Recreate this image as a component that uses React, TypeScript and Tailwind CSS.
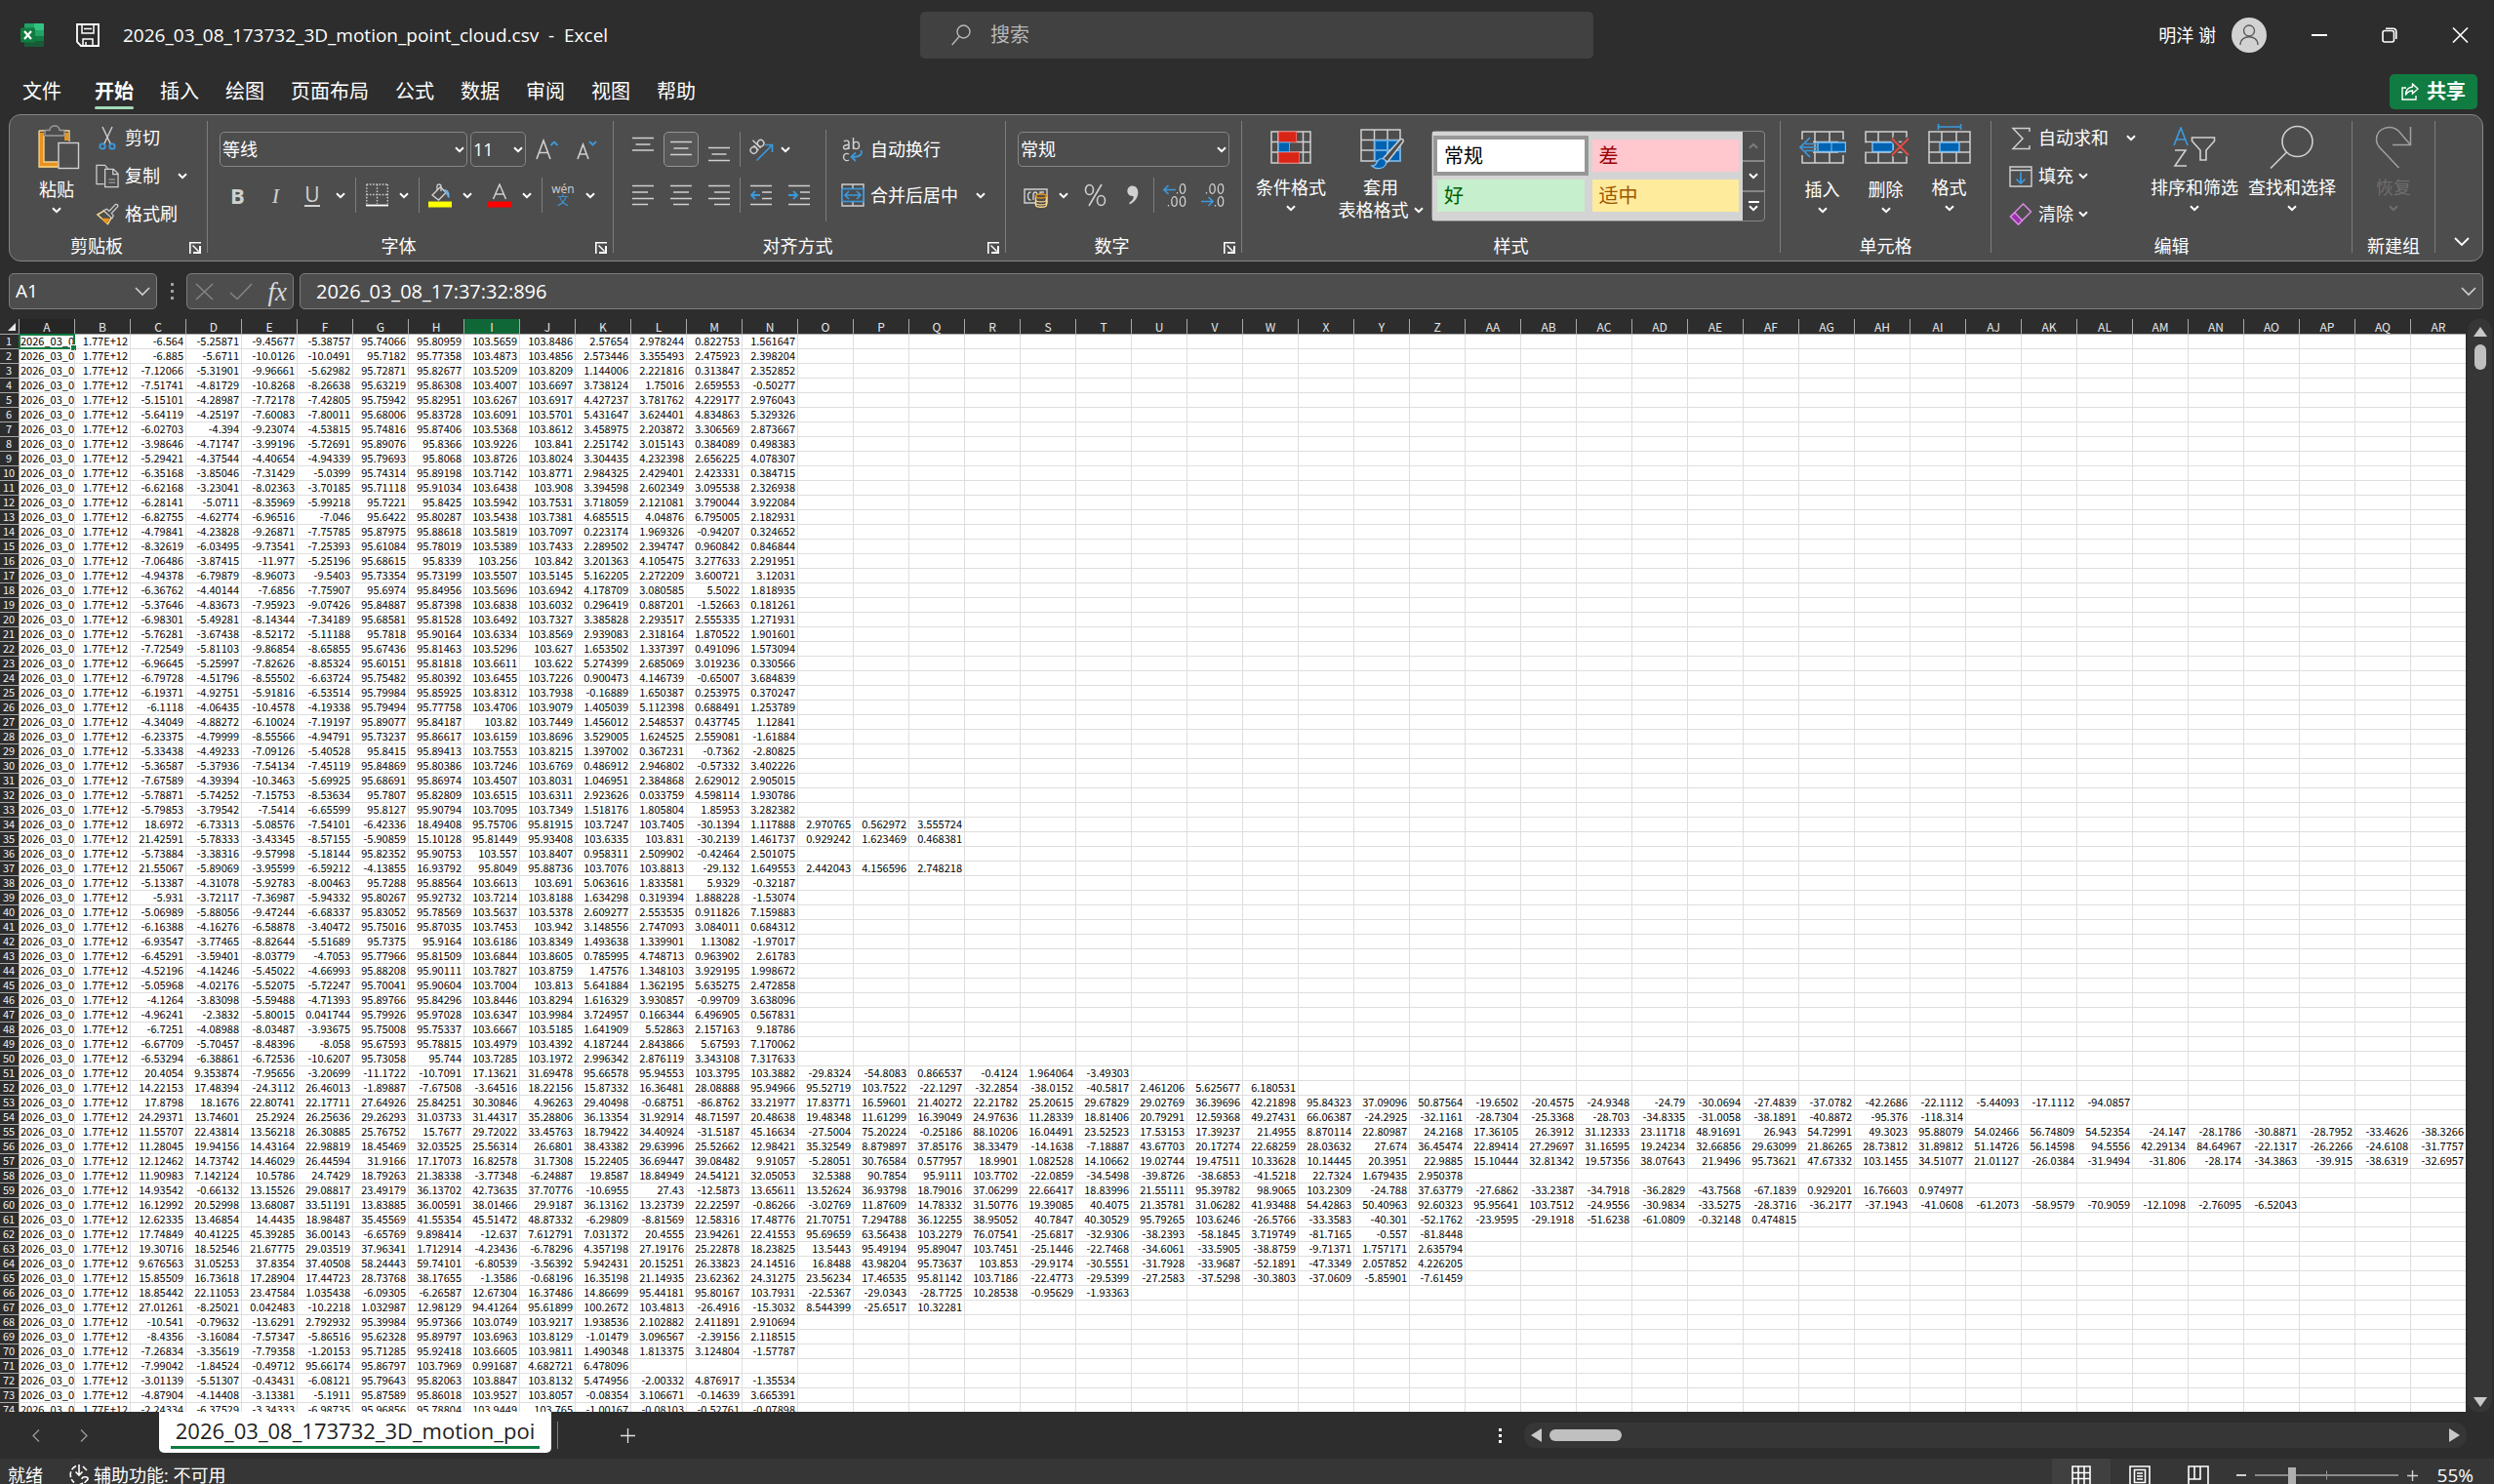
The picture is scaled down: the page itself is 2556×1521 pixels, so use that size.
import type { ReactNode } from "react";

const RAW = `
-6.564 -5.25871 -9.45677 -5.38757 95.74066 95.80959 103.5659 103.8486 2.57654 2.978244 0.822753 1.561647
-6.885 -5.6711 -10.0126 -10.0491 95.7182 95.77358 103.4873 103.4856 2.573446 3.355493 2.475923 2.398204
-7.12066 -5.31901 -9.96661 -5.62982 95.72871 95.82677 103.5209 103.8209 1.144006 2.221816 0.313847 2.352852
-7.51741 -4.81729 -10.8268 -8.26638 95.63219 95.86308 103.4007 103.6697 3.738124 1.75016 2.659553 -0.50277
-5.15101 -4.28987 -7.72178 -7.42805 95.75942 95.82951 103.6267 103.6917 4.427237 3.781762 4.229177 2.976043
-5.64119 -4.25197 -7.60083 -7.80011 95.68006 95.83728 103.6091 103.5701 5.431647 3.624401 4.834863 5.329326
-6.02703 -4.394 -9.23074 -4.53815 95.74816 95.87406 103.5368 103.8612 3.458975 2.203872 3.306569 2.873667
-3.98646 -4.71747 -3.99196 -5.72691 95.89076 95.8366 103.9226 103.841 2.251742 3.015143 0.384089 0.498383
-5.29421 -4.37544 -4.40654 -4.94339 95.79693 95.8068 103.8726 103.8024 3.304435 4.232398 2.656225 4.078307
-6.35168 -3.85046 -7.31429 -5.0399 95.74314 95.89198 103.7142 103.8771 2.984325 2.429401 2.423331 0.384715
-6.62168 -3.23041 -8.02363 -3.70185 95.71118 95.91034 103.6438 103.908 3.394598 2.602349 3.095538 2.326938
-6.28141 -5.0711 -8.35969 -5.99218 95.7221 95.8425 103.5942 103.7531 3.718059 2.121081 3.790044 3.922084
-6.82755 -4.62774 -6.96516 -7.046 95.6422 95.80287 103.5438 103.7381 4.685515 4.04876 6.795005 2.182931
-4.79841 -4.23828 -9.26871 -7.75785 95.87975 95.88618 103.5819 103.7097 0.223174 1.969326 -0.94207 0.324652
-8.32619 -6.03495 -9.73541 -7.25393 95.61084 95.78019 103.5389 103.7433 2.289502 2.394747 0.960842 0.846844
-7.06486 -3.87415 -11.977 -5.25196 95.68615 95.8339 103.256 103.842 3.201363 4.105475 3.277633 2.291951
-4.94378 -6.79879 -8.96073 -9.5403 95.73354 95.73199 103.5507 103.5145 5.162205 2.272209 3.600721 3.12031
-6.36762 -4.40144 -7.6856 -7.75907 95.6974 95.84956 103.5696 103.6942 4.178709 3.080585 5.5022 1.818935
-5.37646 -4.83673 -7.95923 -9.07426 95.84887 95.87398 103.6838 103.6032 0.296419 0.887201 -1.52663 0.181261
-6.98301 -5.49281 -8.14344 -7.34189 95.68581 95.81528 103.6492 103.7327 3.385828 2.293517 2.555335 1.271931
-5.76281 -3.67438 -8.52172 -5.11188 95.7818 95.90164 103.6334 103.8569 2.939083 2.318164 1.870522 1.901601
-7.72549 -5.81103 -9.86854 -8.65855 95.67436 95.81463 103.5296 103.627 1.653502 1.337397 0.491096 1.573094
-6.96645 -5.25997 -7.82626 -8.85324 95.60151 95.81818 103.6611 103.622 5.274399 2.685069 3.019236 0.330566
-6.79728 -4.51796 -8.55502 -6.63724 95.75482 95.80392 103.6455 103.7226 0.900473 4.146739 -0.65007 3.684839
-6.19371 -4.92751 -5.91816 -6.53514 95.79984 95.85925 103.8312 103.7938 -0.16889 1.650387 0.253975 0.370247
-6.1118 -4.06435 -10.4578 -4.19338 95.79494 95.77758 103.4706 103.9079 1.405039 5.112398 0.688491 1.253789
-4.34049 -4.88272 -6.10024 -7.19197 95.89077 95.84187 103.82 103.7449 1.456012 2.548537 0.437745 1.12841
-6.23375 -4.79999 -8.55566 -4.94791 95.73237 95.86617 103.6159 103.8696 3.529005 1.624525 2.559081 -1.61884
-5.33438 -4.49233 -7.09126 -5.40528 95.8415 95.89413 103.7553 103.8215 1.397002 0.367231 -0.7362 -2.80825
-5.36587 -5.37936 -7.54134 -7.45119 95.84869 95.80386 103.7246 103.6769 0.486912 2.946802 -0.57332 3.402226
-7.67589 -4.39394 -10.3463 -5.69925 95.68691 95.86974 103.4507 103.8031 1.046951 2.384868 2.629012 2.905015
-5.78871 -5.74252 -7.15753 -8.53634 95.7807 95.82809 103.6515 103.6311 2.923626 0.033759 4.598114 1.930786
-5.79853 -3.79542 -7.5414 -6.65599 95.8127 95.90794 103.7095 103.7349 1.518176 1.805804 1.85953 3.282382
18.6972 -6.73313 -5.08576 -7.54101 -6.42336 18.49408 95.75706 95.81915 103.7247 103.7405 -30.1394 1.117888 2.970765 0.562972 3.555724
21.42591 -5.78333 -3.43345 -8.57155 -5.90859 15.10128 95.81449 95.93408 103.6335 103.831 -30.2139 1.461737 0.929242 1.623469 0.468381
-5.73884 -3.38316 -9.57998 -5.18144 95.82352 95.90753 103.557 103.8407 0.958311 2.509902 -0.42464 2.501075
21.55067 -5.89069 -3.95599 -6.59212 -4.13855 16.93792 95.8049 95.88736 103.7076 103.8813 -29.132 1.649553 2.442043 4.156596 2.748218
-5.13387 -4.31078 -5.92783 -8.00463 95.7288 95.88564 103.6613 103.691 5.063616 1.833581 5.9329 -0.32187
-5.931 -3.72117 -7.36987 -5.94332 95.80267 95.92732 103.7214 103.8188 1.634298 0.319394 1.888228 -1.53074
-5.06989 -5.88056 -9.47244 -6.68337 95.83052 95.78569 103.5637 103.5378 2.609277 2.553535 0.911826 7.159883
-6.16388 -4.16276 -6.58878 -3.40472 95.75016 95.87035 103.7453 103.942 3.148556 2.747093 3.084011 0.684312
-6.93547 -3.77465 -8.82644 -5.51689 95.7375 95.9164 103.6186 103.8349 1.493638 1.339901 1.13082 -1.97017
-6.45291 -3.59401 -8.03779 -4.7053 95.77966 95.81509 103.6844 103.8605 0.785995 4.748713 0.963902 2.61783
-4.52196 -4.14246 -5.45022 -4.66993 95.88208 95.90111 103.7827 103.8759 1.47576 1.348103 3.929195 1.998672
-5.05968 -4.02176 -5.52075 -5.72247 95.70041 95.90604 103.7004 103.813 5.641884 1.362195 5.635275 2.472858
-4.1264 -3.83098 -5.59488 -4.71393 95.89766 95.84296 103.8446 103.8294 1.616329 3.930857 -0.99709 3.638096
-4.96241 -2.3832 -5.80015 0.041744 95.79926 95.97028 103.6347 103.9984 3.724957 0.166344 6.496905 0.567831
-6.7251 -4.08988 -8.03487 -3.93675 95.75008 95.75337 103.6667 103.5185 1.641909 5.52863 2.157163 9.18786
-6.67709 -5.70457 -8.48396 -8.058 95.67593 95.78815 103.4979 103.4392 4.187244 2.843866 5.67593 7.170062
-6.53294 -6.38861 -6.72536 -10.6207 95.73058 95.744 103.7285 103.1972 2.996342 2.876119 3.343108 7.317633
20.4054 9.353874 -7.95656 -3.20699 -11.1722 -10.7091 17.13621 31.69478 95.66578 95.94553 103.3795 103.3882 -29.8324 -54.8083 0.866537 -0.4124 1.964064 -3.49303
14.22153 17.48394 -24.3112 26.46013 -1.89887 -7.67508 -3.64516 18.22156 15.87332 16.36481 28.08888 95.94966 95.52719 103.7522 -22.1297 -32.2854 -38.0152 -40.5817 2.461206 5.625677 6.180531
17.8798 18.1676 22.80741 22.17711 27.64926 25.84251 30.30846 4.96263 29.40498 -0.68751 -86.8762 33.21977 17.83771 16.59601 21.40272 22.21782 25.20615 29.67829 29.02769 36.39696 42.21898 95.84323 37.09096 50.87564 -19.6502 -20.4575 -24.9348 -24.79 -30.0694 -27.4839 -37.0782 -42.2686 -22.1112 -5.44093 -17.1112 -94.0857
24.29371 13.74601 25.2924 26.25636 29.26293 31.03733 31.44317 35.28806 36.13354 31.92914 48.71597 20.48638 19.48348 11.61299 16.39049 24.97636 11.28339 18.81406 20.79291 12.59368 49.27431 66.06387 -24.2925 -32.1161 -28.7304 -25.3368 -28.703 -34.8335 -31.0058 -38.1891 -40.8872 -95.376 -118.314
11.55707 22.43814 13.56218 26.30885 25.76752 15.7677 29.72022 33.45763 18.79422 34.40924 -31.5187 45.16634 -27.5004 75.20224 -0.25186 88.10206 16.04491 23.52523 17.53153 17.39237 21.4955 8.870114 22.80987 24.2168 17.36105 26.3912 31.12333 23.11718 48.91691 26.943 54.72991 49.3023 95.88079 54.02466 56.74809 54.52354 -24.147 -28.1786 -30.8871 -28.7952 -33.4626 -38.3266
11.28045 19.94156 14.43164 22.98819 18.45469 32.03525 25.56314 26.6801 38.43382 29.63996 25.52662 12.98421 35.32549 8.879897 37.85176 38.33479 -14.1638 -7.18887 43.67703 20.17274 22.68259 28.03632 27.674 36.45474 22.89414 27.29697 31.16595 19.24234 32.66856 29.63099 21.86265 28.73812 31.89812 51.14726 56.14598 94.5556 42.29134 84.64967 -22.1317 -26.2266 -24.6108 -31.7757
12.12462 14.73742 14.46029 26.44594 31.9166 17.17073 16.82578 31.7308 15.22405 36.69447 39.08482 9.91057 -5.28051 30.76584 0.577957 18.9901 1.082528 14.10662 19.02744 19.47511 10.33628 10.14445 20.3951 22.9885 15.10444 32.81342 19.57356 38.07643 21.9496 95.73621 47.67332 103.1455 34.51077 21.01127 -26.0384 -31.9494 -31.806 -28.174 -34.3863 -39.915 -38.6319 -32.6957
11.90983 7.142124 10.5786 24.7429 18.79263 21.38338 -3.77348 -6.24887 19.8587 18.84949 24.54121 32.05053 32.5388 90.7854 95.9111 103.7702 -22.0859 -34.5498 -39.8726 -38.6853 -41.5218 22.7324 1.679435 2.950378
14.93542 -0.66132 13.15526 29.08817 23.49179 36.13702 42.73635 37.70776 -10.6955 27.43 -12.5873 13.65611 13.52624 36.93798 18.79016 37.06299 22.66417 18.83996 21.55111 95.39782 98.9065 103.2309 -24.788 37.63779 -27.6862 -33.2387 -34.7918 -36.2829 -43.7568 -67.1839 0.929201 16.76603 0.974977
16.12992 20.52998 13.68087 33.51191 13.83885 36.00591 38.01466 29.9187 36.13162 13.23739 22.22597 -0.86266 -3.02769 11.87609 14.78332 31.50776 19.39085 40.4075 21.35781 31.06282 41.93488 54.42863 50.40963 92.60323 95.95641 103.7512 -24.9556 -30.9834 -33.5275 -28.3716 -36.2177 -37.1943 -41.0608 -61.2073 -58.9579 -70.9059 -12.1098 -2.76095 -6.52043
12.62335 13.46854 14.4435 18.98487 35.45569 41.55354 45.51472 48.87332 -6.29809 -8.81569 12.58316 17.48776 21.70751 7.294788 36.12255 38.95052 40.7847 40.30529 95.79265 103.6246 -26.5766 -33.3583 -40.301 -52.1762 -23.9595 -29.1918 -51.6238 -61.0809 -0.32148 0.474815
17.74849 40.41225 45.39285 36.00143 -6.65769 9.898414 -12.637 7.612791 7.031372 20.4555 23.94261 22.41553 95.69659 63.56438 103.2279 76.07541 -25.6817 -32.9306 -38.2393 -58.1845 3.719749 -81.7165 -0.557 -81.8448
19.30716 18.52546 21.67775 29.03519 37.96341 1.712914 -4.23436 -6.78296 4.357198 27.19176 25.22878 18.23825 13.5443 95.49194 95.89047 103.7451 -25.1446 -22.7468 -34.6061 -33.5905 -38.8759 -9.71371 1.757171 2.635794
9.676563 31.05253 37.8354 37.40508 58.24443 59.74101 -6.80539 -3.56392 5.942431 20.15251 26.33823 24.14516 16.8488 43.98204 95.73637 103.853 -29.9174 -30.5551 -31.7928 -33.9687 -52.1891 -47.3349 2.057852 4.226205
15.85509 16.73618 17.28904 17.44723 28.73768 38.17655 -1.3586 -0.68196 16.35198 21.14935 23.62362 24.31275 23.56234 17.46535 95.81142 103.7186 -22.4773 -29.5399 -27.2583 -37.5298 -30.3803 -37.0609 -5.85901 -7.61459
18.85442 22.11053 23.47584 1.035438 -6.09305 -6.26587 12.67304 16.37486 14.86699 95.44181 95.80167 103.7931 -22.5367 -29.0343 -28.7725 10.28538 -0.95629 -1.93363
27.01261 -8.25021 0.042483 -10.2218 1.032987 12.98129 94.41264 95.61899 100.2672 103.4813 -26.4916 -15.3032 8.544399 -25.6517 10.32281
-10.541 -0.79632 -13.6291 2.792932 95.39984 95.97366 103.0749 103.9217 1.938536 2.102882 2.411891 2.910694
-8.4356 -3.16084 -7.57347 -5.86516 95.62328 95.89797 103.6963 103.8129 -1.01479 3.096567 -2.39156 2.118515
-7.26834 -3.35619 -7.79358 -1.20153 95.71285 95.92418 103.6605 103.9811 1.490348 1.813375 3.124804 -1.57787
-7.99042 -1.84524 -0.49712 95.66174 95.86797 103.7969 0.991687 4.682721 6.478096
-3.01139 -5.51307 -0.43431 -6.08121 95.79643 95.82063 103.8847 103.8132 5.474956 -2.00332 4.876917 -1.35534
-4.87904 -4.14408 -3.13381 -5.1911 95.87589 95.86018 103.9527 103.8057 -0.08354 3.106671 -0.14639 3.665391
-2.24334 -6.37529 -3.34333 -6.98735 95.96856 95.78804 103.9449 103.765 -1.00167 -0.08103 -0.52761 -0.07898
`;

const ROWS = RAW.trim()
  .split("\n")
  .map((line) => ["2026_03_08", "1.77E+12", ...line.split(" ")]);

const COLS = Array.from({ length: 44 }, (_, i) =>
  i < 26 ? String.fromCharCode(65 + i) : "A" + String.fromCharCode(39 + i)
);

const G = "#d0d0d0";
const B = "#3b99dd";

/* ---------- shared pieces ---------- */

function Chev({ color = "#fff" }: { color?: string }) {
  return (
    <svg width="10" height="7" viewBox="0 0 10 7" fill="none" stroke={color} strokeWidth="2" className="shrink-0">
      <path d="M1 1.2 5 5.2 9 1.2" />
    </svg>
  );
}

function Tool({ label, className = "", children }: { label: string; className?: string; children: ReactNode }) {
  return (
    <button type="button" aria-label={label} className={`flex h-9 shrink-0 items-center justify-center ${className}`}>
      {children}
    </button>
  );
}

function VLine({ className = "" }: { className?: string }) {
  return <div className={`w-px shrink-0 bg-[#7d7d7d] ${className}`} />;
}

function Group({ label, launcher, className, children }: { label: string; launcher?: boolean; className: string; children: ReactNode }) {
  return (
    <section aria-label={label} className={`flex flex-col ${className}`}>
      <div className="h-[122px]">{children}</div>
      <div className="flex h-6 items-center">
        <span className="flex-1 text-center leading-6 whitespace-nowrap">{label}</span>
        {launcher && (
          <button type="button" aria-label={`${label}设置`} className="flex w-6 justify-center pt-1">
            <svg width="12" height="12" viewBox="0 0 12 12" fill="none" stroke="#fff">
              <path d="M.8 12V.8H12" strokeWidth="1.6" />
              <path d="M3.5 3.5 9.5 9.5" strokeWidth="1.4" />
              <path d="M11 4v7H4" strokeWidth="2" />
            </svg>
          </button>
        )}
      </div>
    </section>
  );
}

function BigButton({ icon, label, className, dim, gap = "pt-[3px]" }: { icon: ReactNode; label: string; className: string; dim?: boolean; gap?: string }) {
  return (
    <button type="button" className={`flex shrink-0 flex-col items-center ${className} ${dim ? "text-[#6e6e6e]" : ""}`}>
      <span className="flex h-[58px] items-center justify-center">{icon}</span>
      <span className={`leading-6 whitespace-nowrap ${gap}`}>{label}</span>
      <span className="mt-[6px]">
        <Chev color={dim ? "#6e6e6e" : "#fff"} />
      </span>
    </button>
  );
}

function RowButton({ icon, label, children }: { icon: ReactNode; label: string; children?: ReactNode }) {
  return (
    <button type="button" className="flex h-[39px] items-center whitespace-nowrap">
      <span className="mr-[6px] flex w-6 justify-center">{icon}</span>
      {label}
      {children}
    </button>
  );
}

function Combo({ label, value, className }: { label: string; value: string; className: string }) {
  return (
    <div className={`relative h-9 shrink-0 ${className}`}>
      <select
        aria-label={label}
        defaultValue={value}
        className="h-full w-full appearance-none rounded-[5px] border border-[#868686] bg-[#4d4d4d] pl-[2px] text-[18px] text-white"
      >
        <option>{value}</option>
      </select>
      <span className="pointer-events-none absolute top-[15px] right-[3px]">
        <Chev />
      </span>
    </div>
  );
}

/* ---------- icons ---------- */

const ExcelLogo = () => (
  <svg width="26" height="26" viewBox="0 0 26 26">
    <path d="M6 1h9v7H5V2a1 1 0 0 1 1-1z" fill="#21a366" />
    <path d="M15 1h9a1 1 0 0 1 1 1v6H15z" fill="#33c481" />
    <path d="M5 8h10v6H5z" fill="#107c41" />
    <path d="M15 8h10v6H15z" fill="#21a366" />
    <path d="M15 14h10v5H15z" fill="#107c41" />
    <path d="M5 14h10v5h10v5a1 1 0 0 1-1 1H6a1 1 0 0 1-1-1z" fill="#185c37" />
    <rect x="1" y="5.5" width="15" height="15" rx="1.2" fill="#107c41" />
    <path d="m5 9 7 8M12 9l-7 8" stroke="#fff" strokeWidth="2.2" />
  </svg>
);

const SaveIcon = () => (
  <svg width="24" height="24" viewBox="0 0 24 24" fill="none" stroke="#fff" strokeWidth="1.8">
    <path d="M1 1h22v22H5L1 19z" />
    <path d="M6 1v9h12V1M7 23v-7h10v7M10 19v4M8 5.5h8" strokeWidth="1.5" />
  </svg>
);

const PasteIcon = () => (
  <svg width="44" height="46" viewBox="0 0 44 46" fill="none" className="ml-[5px]">
    <path d="M3.5 8v33h18" stroke="#e8931f" strokeWidth="5" />
    <path d="M29 8v8" stroke="#e8931f" strokeWidth="4" />
    <path d="M1 6h7M25 6h7v11M1 6v37h19M6 11v27h14" stroke="#fbd88d" strokeWidth="1.3" />
    <path d="M7 11V5.500h5c0-6 10-6 10 0h5V11z" fill="#4d4d4d" stroke="#9a9a9a" strokeWidth="1.4" />
    <rect x="21" y="18.500" width="20.500" height="26" fill="#4d4d4d" stroke={G} strokeWidth="1.4" />
  </svg>
);

const CutIcon = () => (
  <svg width="18" height="25" viewBox="0 0 18 25" fill="none">
    <path d="M4 1 12.500 19M14 1 5.500 19" stroke={G} strokeWidth="1.4" />
    <circle cx="4" cy="21" r="2.700" stroke={B} strokeWidth="1.800" />
    <circle cx="14" cy="21" r="2.700" stroke={B} strokeWidth="1.800" />
  </svg>
);

const CopyIcon = () => (
  <svg width="25" height="25" viewBox="0 0 25 25" fill="none" stroke={G} strokeWidth="1.300">
    <path d="M9 21H1V1h9l3 3.500" />
    <path d="M10 5h9l5 5v14H10zM18.500 5v5.500H24" />
    <path d="M14 16h7M14 19.500h7" stroke="#9a9a9a" />
  </svg>
);

const BrushIcon = () => (
  <svg width="25" height="24" viewBox="0 0 25 24" fill="none">
    <path d="M2 12 13 22l4.500-8L9 8z" stroke="#fbd88d" strokeWidth="1.500" />
    <path d="M6 16h9l-3 6z" fill="#e8931f" />
    <path d="m8.500 7.500 9 8.500 1.500-3-2-2.500 6.500-7c1-1.500-1-3.300-2.500-2.300l-6.500 7L12 6z" fill="#4d4d4d" stroke={G} strokeWidth="1.300" />
  </svg>
);

function LinesIcon({ d, w = 22 }: { d: string; w?: number }) {
  return (
    <svg width={w} height="36" viewBox={`0 0 ${w} 36`} stroke={G} strokeWidth="1.400">
      <path d={d} />
    </svg>
  );
}

const BorderIcon = () => (
  <svg width="23" height="24" viewBox="0 0 23 24" fill="none" stroke={G}>
    <path d="M.7 1h22M.7 11.500h22M.8 1v20M11.500 1v20M22.300 1v20" strokeWidth="1.400" strokeDasharray="1.600 1.600" />
    <path d="M0 22.500h23" stroke="#fff" strokeWidth="1.800" />
  </svg>
);

const FillIcon = () => (
  <svg width="24" height="25" viewBox="0 0 24 25" fill="none">
    <path d="M4 12 12.500 3.500 18 9.500 10.500 17z" stroke={G} strokeWidth="1.400" />
    <path d="M9 7V2.500C9 .5 13 .3 13 3v5" stroke={G} strokeWidth="1.300" />
    <path d="M16 6c5 0 6 4 5.500 9-2 0-2-4-4-5z" fill="#6fb1e4" />
    <path d="M0 18.500h24v6H0z" fill="#ff0" />
  </svg>
);

const FontColorIcon = () => (
  <svg width="24" height="25" viewBox="0 0 24 25" fill="none">
    <path d="M5.500 16 12 1l6.500 15M8 11h8" stroke={G} strokeWidth="1.500" />
    <path d="M0 18.500h24v6H0z" fill="#f00" />
  </svg>
);

const GrowIcon = ({ small }: { small?: boolean }) => (
  <svg width="24" height="24" viewBox="0 0 24 24" fill="none">
    <path d={small ? "M2 22 7.500 7 13 22M4 17h7" : "M1 22 8 3l7 19M3.500 15.500h9"} stroke={G} strokeWidth="1.600" />
    <path d={small ? "m14 4 3.500 3.500L21 4" : "m15.500 8 3.500-3.500L22.500 8"} stroke={B} strokeWidth="1.800" />
  </svg>
);

const OrientIcon = () => (
  <svg width="26" height="26" viewBox="0 0 26 26" fill="none">
    <g transform="rotate(-45 8 10)" stroke={G} strokeWidth="1.400">
      <circle cx="3.500" cy="11" r="3.300" />
      <path d="M7 7.500v7M10 3v11.500" />
      <circle cx="13.500" cy="11" r="3.300" />
    </g>
    <path d="M8.500 24.500 24 9M17 8.500h7.500V16" stroke={B} strokeWidth="1.700" />
  </svg>
);

const WrapIcon = () => (
  <svg width="22" height="26" viewBox="0 0 22 26" fill="none">
    <g stroke={G} strokeWidth="1.400">
      <path d="M2 5c1-1.300 5-1.500 5 1.500V13M7 8.500C3 8.200 1.500 9.500 1.500 11c0 2.500 4 2.200 5.500 0M11.500 1v12" />
      <ellipse cx="14.500" cy="9" rx="3" ry="3.600" />
      <path d="M7 18c-2-1.300-5.500-.5-5.500 3S5 25.300 7 24" />
    </g>
    <path d="M19.500 14c1.500 4-1 7-9 6.800M14 16.500l-4.500 4.300L14 25" stroke={B} strokeWidth="1.800" />
  </svg>
);

const MergeIcon = () => (
  <svg width="24" height="24" viewBox="0 0 24 24" fill="none">
    <path d="M1 1h22v22H1zM12 1v4M12 19v4" stroke={G} strokeWidth="1.400" />
    <rect x="1" y="5.500" width="22" height="13" fill="#4d4d4d" stroke={B} strokeWidth="1.600" />
    <path d="M4 12h16M8 8l-4 4 4 4M16 8l4 4-4 4" stroke={B} strokeWidth="1.700" />
  </svg>
);

function IndentIcon({ right }: { right?: boolean }) {
  return (
    <svg width="22" height="36" viewBox="0 0 22 36" fill="none">
      <path d="M0 8.500h22M12 15h10M12 21.500h10M0 27.500h22" stroke={G} strokeWidth="1.400" />
      <path d={right ? "M0 18h9M5 14l4 4-4 4" : "M1 18h9M5 14l-4 4 4 4"} stroke={B} strokeWidth="1.800" />
    </svg>
  );
}

const MoneyIcon = () => (
  <svg width="25" height="25" viewBox="0 0 25 25" fill="none">
    <path d="M1 6h23v14H1z" stroke={G} strokeWidth="1.400" />
    <path d="M7.500 9C3.500 9 3.500 17 7.500 17M14 12c0-4-4-4-4 0v5M17 11V9h4" stroke={G} strokeWidth="1.400" />
    <path d="M12.500 13v9c0 3 11 3 11 0v-9z" fill="#4d4d4d" stroke="#fbd88d" strokeWidth="1.500" />
    <ellipse cx="18" cy="13" rx="5.500" ry="2" fill="#4d4d4d" stroke="#e8931f" strokeWidth="1.500" />
    <path d="M12.500 17c0 2.500 11 2.500 11 0M12.500 20c0 2.500 11 2.500 11 0" stroke="#fbd88d" strokeWidth="1.200" />
  </svg>
);

const PercentIcon = () => (
  <svg width="23" height="24" viewBox="0 0 23 24" fill="none" stroke={G} strokeWidth="1.600">
    <ellipse cx="5.500" cy="6.500" rx="4" ry="5" />
    <ellipse cx="17.500" cy="17.500" rx="4" ry="5" />
    <path d="M18 1 5 23" />
  </svg>
);

const CommaIcon = () => (
  <svg width="12" height="20" viewBox="0 0 12 20">
    <path d="M5.500.5c8.500 0 8 15-3 19v-2c3.500-2 4.500-4.500 4-6.500-8 1-8-10.500-1-10.500z" fill={G} />
  </svg>
);

function DecimalIcon({ less }: { less?: boolean }) {
  return (
    <svg width="24" height="26" viewBox="0 0 24 26" fill="none">
      <g stroke={G} strokeWidth="1.300">
        {less ? (
          <>
            <ellipse cx="11.500" cy="6.500" rx="2.700" ry="4.800" />
            <ellipse cx="20" cy="6.500" rx="2.700" ry="4.800" />
            <ellipse cx="20" cy="19.500" rx="2.700" ry="4.800" />
            <path d="M5.500 10v1.500M14.500 23v1.500" />
          </>
        ) : (
          <>
            <ellipse cx="20" cy="6.500" rx="2.700" ry="4.800" />
            <ellipse cx="11.500" cy="19.500" rx="2.700" ry="4.800" />
            <ellipse cx="20" cy="19.500" rx="2.700" ry="4.800" />
            <path d="M14.500 10v1.500M5.500 23v1.500" />
          </>
        )}
      </g>
      <path
        d={less ? "M0 19.500h12M7.500 15l4.500 4.500L7.500 24" : "M1 7.500h12M5.500 3 1 7.500 5.500 12"}
        stroke={B}
        strokeWidth="1.700"
      />
    </svg>
  );
}

const CondIcon = () => (
  <svg width="42" height="34" viewBox="0 0 42 34" fill="none">
    <path d="M1 1h40v32H1zM1 11.500h40M1 22h40M8 1v32M33.500 1v32" stroke={G} strokeWidth="1.500" />
    <path d="M8.500 1h18v10.500h-18zM8.500 22h21v11h-21z" fill="#d92516" stroke="#f0625a" />
    <path d="M8.500 12h11v9.500h-11z" fill="#0063b1" stroke="#5aa7e4" />
  </svg>
);

const TableIcon = () => (
  <svg width="46" height="42" viewBox="0 0 46 42" fill="none">
    <path d="M15 11.500h26V33H15z" fill="#0063b1" />
    <path d="M1 1h40v32H1zM1 11.500h40M1 22h40M14.500 1v32M28 1v32" stroke={G} strokeWidth="1.500" />
    <path d="M15 12h26v21H15zM15 22h26M28 12v21" stroke="#5aa7e4" strokeWidth="1.300" />
    <path d="m23 31 17-19c3-3 5.500-1 3.500 2L28 34z" fill="#4d4d4d" stroke={G} strokeWidth="1.500" />
    <path d="M12 38c6 0 4-5 8-7 5-1.500 8 3 6 6-3 4.500-10 5-14 1z" fill="#0063b1" stroke="#7dc0f5" strokeWidth="1.300" />
  </svg>
);

function CellsIcon({ kind }: { kind: "insert" | "delete" | "format" }) {
  return (
    <svg width="48" height="50" viewBox="0 0 48 50" fill="none">
      <path d="M3 9h42v32H3zM3 19.500h42M3 30h42M16 9v32M31 9v32" stroke={G} strokeWidth="1.500" />
      {kind === "insert" && (
        <>
          <path d="M40 17h8v16h-8z" fill="#4d4d4d" />
          <path d="M2 17h12v16H2z" fill="#4d4d4d" />
          <path d="M19 20h28.500v9.500H19z" fill="#0063b1" stroke="#7dc0f5" strokeWidth="1.400" />
          <path d="M33 20v10" stroke="#7dc0f5" />
          <path d="M1 25h19M11 15 1 25l10 10M6 21.500h13M6 28.500h13" stroke={B} strokeWidth="1.600" />
        </>
      )}
      {kind === "delete" && (
        <>
          <path d="M0 20.500h9v9H0zM40 20h6v10h-6z" fill="#4d4d4d" />
          <path d="M10 20h21v9.500H10z" fill="#0063b1" stroke="#7dc0f5" strokeWidth="1.400" />
          <path d="m30 16 17 17M47 16 30 33" stroke="#4d4d4d" strokeWidth="5" />
          <path d="m30 16 17 17M47 16 30 33" stroke="#e74b45" strokeWidth="1.800" />
        </>
      )}
      {kind === "format" && (
        <>
          <path d="M14 20h20v9.500H14z" fill="#0063b1" stroke="#7dc0f5" strokeWidth="1.400" />
          <path d="M12.500 4h23M12.500 1v6M35.500 1v6" stroke={B} strokeWidth="1.600" />
        </>
      )}
    </svg>
  );
}

const SigmaIcon = () => (
  <svg width="20" height="24" viewBox="0 0 20 24" fill="none" stroke={G} strokeWidth="1.500">
    <path d="M19 5V1.500H2L12 12 2 22.500h17V19" />
  </svg>
);

const FillDownIcon = () => (
  <svg width="24" height="22" viewBox="0 0 24 22" fill="none">
    <path d="M1 1h22v20H1zM1 4.500h22" stroke={G} strokeWidth="1.400" />
    <path d="M12 6.500V18M7.500 13.500 12 18l4.500-4.500" stroke={B} strokeWidth="1.700" />
  </svg>
);

const EraserIcon = () => (
  <svg width="24" height="23" viewBox="0 0 24 23" fill="none" stroke="#d88be0" strokeWidth="1.500">
    <path d="M1.500 14 14.500 1 22.500 9 9.500 22z" />
    <path d="M1.500 14 6 10l7.500 8-4 4z" fill="#9b2fae" />
  </svg>
);

const SortIcon = () => (
  <svg width="44" height="42" viewBox="0 0 44 42" fill="none">
    <path d="m1 19 7-18 7 18M3.500 13h9" stroke={B} strokeWidth="1.700" />
    <path d="M2 24h11L2 40h12" stroke={G} strokeWidth="1.600" />
    <path d="M19.500 11h23v3.500L34 24v10h-6V24l-8.500-9.500z" stroke={G} strokeWidth="1.600" />
  </svg>
);

const FindIcon = () => (
  <svg width="46" height="46" viewBox="0 0 46 46" fill="none" stroke={G} strokeWidth="1.600">
    <circle cx="28.500" cy="17" r="15.500" />
    <path d="M17.500 28 1 44.500" />
  </svg>
);

const RedoIcon = () => (
  <svg width="38" height="44" viewBox="0 0 38 44" fill="none" stroke="#a0a0a0" strokeWidth="1.500">
    <path d="M36.500 1v18.500H18" />
    <path d="M36.500 19.500 24 5C16-2 1.500 2 1.500 14c0 6 3 8 6 11l17 18" />
  </svg>
);

const SearchGlyph = () => (
  <svg width="20" height="22" viewBox="0 0 20 22" fill="none" stroke="#b8b8b8" strokeWidth="1.400">
    <circle cx="12.500" cy="7.500" r="6.500" />
    <path d="M8 12.500.7 21" />
  </svg>
);

/* ---------- page sections ---------- */

function TitleBar() {
  return (
    <header className="grid h-[72px] shrink-0 grid-cols-[1fr_690px_1fr] items-center pl-5">
      <div className="flex items-center">
        <ExcelLogo />
        <button type="button" aria-label="保存" className="ml-8">
          <SaveIcon />
        </button>
        <span className="ml-6 text-[19px] whitespace-pre">2026_03_08_173732_3D_motion_point_cloud.csv  -  Excel</span>
      </div>
      <label className="flex h-12 items-center rounded-[5px] bg-[#414141] pl-8">
        <SearchGlyph />
        <input
          aria-label="搜索"
          placeholder="搜索"
          className="ml-5 flex-1 bg-transparent text-[20px] outline-none placeholder:text-[#b8b8b8]"
        />
      </label>
      <div className="flex items-center justify-end pr-[26px]">
        <span className="text-[18px]">明洋 谢</span>
        <svg width="36" height="36" viewBox="0 0 36 36" fill="none" className="ml-4">
          <circle cx="18" cy="18" r="18" fill="#d2d2d2" />
          <circle cx="18" cy="13.500" r="5.500" stroke="#555" strokeWidth="1.300" />
          <path d="M9 28c0-11 18-11 18 0" stroke="#555" strokeWidth="1.300" />
        </svg>
        <button type="button" aria-label="最小化" className="ml-[46px] w-4">
          <div className="h-[2px] bg-white" />
        </button>
        <button type="button" aria-label="还原" className="ml-14">
          <svg width="16" height="16" viewBox="0 0 16 16" fill="none" stroke="#fff" strokeWidth="1.600">
            <rect x="1" y="3.500" width="11.500" height="11.500" rx="2" />
            <path d="M4 1.200h7.500a3.300 3.300 0 0 1 3.300 3.300V12" />
          </svg>
        </button>
        <button type="button" aria-label="关闭" className="ml-14">
          <svg width="17" height="16" viewBox="0 0 17 16" stroke="#fff" strokeWidth="1.600">
            <path d="m1 .5 15 15M16 .5 1 15.500" />
          </svg>
        </button>
      </div>
    </header>
  );
}

const TABS = ["开始", "插入", "绘图", "页面布局", "公式", "数据", "审阅", "视图", "帮助"];

function TabBar() {
  return (
    <nav className="flex h-[45px] shrink-0 items-start pt-1 pr-[17px] pl-[23px] text-[20px] leading-9">
      <button type="button" className="mr-[34px]">文件</button>
      <div className="flex flex-1 gap-[27px]">
        {TABS.map((t, i) => (
          <button key={t} type="button" className={i === 0 ? "relative font-bold" : "relative"}>
            {t}
            {i === 0 && <span className="absolute inset-x-0 bottom-0 h-[3px] rounded bg-[#a3d9b9]" />}
          </button>
        ))}
      </div>
      <button type="button" className="flex h-9 w-[90px] items-center justify-center gap-2 rounded-[5px] bg-[#107c41] font-bold">
        <svg width="18" height="18" viewBox="0 0 18 18" fill="none" stroke="#fff" strokeWidth="1.400">
          <path d="M5 5H1v12h14v-4" />
          <path d="M11.500 1 17 6l-5.500 5V8C8 8 6 9.500 4.500 12.500 4.500 8 7 4.500 11.500 4z" />
        </svg>
        共享
      </button>
    </nav>
  );
}

function StyleCell({ name, className }: { name: string; className: string }) {
  return (
    <button type="button" className={`h-[33px] text-left text-[20px] leading-[33px] ${className}`}>
      {name}
    </button>
  );
}

function Ribbon() {
  return (
    <div className="mr-[11px] ml-[9px] flex h-[151px] shrink-0 rounded-xl border border-[#868686] bg-[#4d4d4d] text-[18px]">
      <Group label="剪贴板" launcher className="w-[202px]">
        <div className="flex pt-1 pl-[18px]">
          <BigButton icon={<PasteIcon />} label="粘贴" className="w-[60px]" gap="pt-[2px]" />
          <div className="ml-[10px] flex flex-col">
            <RowButton icon={<CutIcon />} label="剪切" />
            <RowButton icon={<CopyIcon />} label="复制">
              <span className="ml-[18px]"><Chev /></span>
            </RowButton>
            <RowButton icon={<BrushIcon />} label="格式刷" />
          </div>
        </div>
      </Group>
      <VLine className="mt-[6px] h-[135px]" />

      <Group label="字体" launcher className="w-[415px]">
        <div className="flex pt-[17px] pl-3">
          <Combo label="字体" value="等线" className="w-[254px]" />
          <Combo label="字号" value="11" className="ml-[3px] w-[57px]" />
          <Tool label="增大字号" className="ml-1 w-9"><GrowIcon /></Tool>
          <Tool label="减小字号" className="ml-[5px] w-9"><GrowIcon small /></Tool>
        </div>
        <div className="mt-[11px] flex pl-[11px]">
          <Tool label="加粗" className="w-[39px]"><span className="text-[22px] font-bold text-[#d0d0d0]">B</span></Tool>
          <Tool label="倾斜" className="w-[39px]"><span className="font-['Liberation_Serif'] text-[22px] text-[#d0d0d0] italic">I</span></Tool>
          <Tool label="下划线" className="w-9">
            <span className="border-b-2 border-[#d0d0d0] text-[21px] leading-[22px] text-[#d0d0d0]">U</span>
          </Tool>
          <Tool label="下划线选项" className="w-[22px]"><Chev /></Tool>
          <VLine className="mx-1 h-9" />
          <Tool label="边框" className="w-[34px]"><BorderIcon /></Tool>
          <Tool label="边框选项" className="w-[22px]"><Chev /></Tool>
          <VLine className="mx-1 h-9" />
          <Tool label="填充颜色" className="w-[34px]"><FillIcon /></Tool>
          <Tool label="填充颜色选项" className="w-[22px]"><Chev /></Tool>
          <Tool label="字体颜色" className="w-[43px]"><FontColorIcon /></Tool>
          <Tool label="字体颜色选项" className="w-[14px]"><Chev /></Tool>
          <VLine className="ml-2 h-9" />
          <Tool label="拼音" className="w-[42px] flex-col">
            <span className="text-[12px] leading-3 text-[#d0d0d0]">wén</span>
            <span className="text-[12px] leading-3 text-[#3b99dd]">文</span>
          </Tool>
          <Tool label="拼音选项" className="w-[14px]"><Chev /></Tool>
        </div>
      </Group>
      <VLine className="mt-[6px] h-[135px]" />

      <Group label="对齐方式" launcher className="w-[401px]">
        <div className="flex">
          <div className="w-[217px] pt-[17px] pl-3">
            <div className="flex gap-[3px]">
              <Tool label="顶端对齐" className="w-9"><LinesIcon d="M0 6.500h22M3.500 13h15M0 19h22" /></Tool>
              <Tool label="垂直居中" className="w-9 rounded-[5px] border border-[#949494] bg-[#575757]"><LinesIcon d="M0 10.500h22M3.500 17h15M0 23.500h22" /></Tool>
              <Tool label="底端对齐" className="w-9"><LinesIcon d="M0 16.500h22M3.500 23h15M0 29.500h22" /></Tool>
              <VLine className="h-9" />
              <Tool label="方向" className="w-9"><OrientIcon /></Tool>
              <Tool label="方向选项" className="-ml-[3px] w-[14px]"><Chev /></Tool>
            </div>
            <div className="mt-[11px] flex gap-[3px]">
              <Tool label="左对齐" className="w-9"><LinesIcon d="M0 8.500h22M0 15h16M0 21.500h22M0 27.500h16" /></Tool>
              <Tool label="居中" className="w-9"><LinesIcon d="M0 8.500h22M3 15h16M0 21.500h22M3 27.500h16" /></Tool>
              <Tool label="右对齐" className="w-9"><LinesIcon d="M0 8.500h22M6 15h16M0 21.500h22M6 27.500h16" /></Tool>
              <VLine className="h-9" />
              <Tool label="减少缩进量" className="w-9"><IndentIcon /></Tool>
              <Tool label="增加缩进量" className="w-9"><IndentIcon right /></Tool>
            </div>
          </div>
          <VLine className="mt-[15px] h-[94px]" />
          <div className="flex flex-col items-start gap-[11px] pt-[17px] pl-[15px]">
            <button type="button" className="flex h-9 items-center gap-[6px]"><span className="flex w-6 justify-center"><WrapIcon /></span>自动换行</button>
            <button type="button" className="flex h-9 items-center gap-[6px]">
              <MergeIcon />合并后居中
              <span className="ml-3"><Chev /></span>
            </button>
          </div>
        </div>
      </Group>
      <VLine className="mt-[6px] h-[135px]" />

      <Group label="数字" launcher className="w-[241px]">
        <div className="flex pt-[17px] pl-3">
          <Combo label="数字格式" value="常规" className="w-[217px]" />
        </div>
        <div className="mt-[11px] flex pl-3">
          <Tool label="会计数字格式" className="w-9"><MoneyIcon /></Tool>
          <Tool label="会计格式选项" className="w-[22px]"><Chev /></Tool>
          <Tool label="百分比样式" className="ml-[3px] w-9"><PercentIcon /></Tool>
          <Tool label="千位分隔样式" className="ml-[3px] w-9"><CommaIcon /></Tool>
          <VLine className="mx-[3px] h-9" />
          <Tool label="增加小数位数" className="w-9"><DecimalIcon /></Tool>
          <Tool label="减少小数位数" className="ml-[3px] w-9"><DecimalIcon less /></Tool>
        </div>
      </Group>
      <VLine className="mt-[6px] h-[135px]" />

      <Group label="样式" className="w-[551px]">
        <div className="flex">
          <BigButton icon={<CondIcon />} label="条件格式" className="ml-[10px] w-[80px] pt-1" gap="pt-0" />
          <button type="button" className="ml-[6px] flex w-[92px] flex-col items-center pt-1">
            <span className="flex h-[58px] items-center pt-1 pl-1"><TableIcon /></span>
            <span className="leading-6">套用</span>
            <span className="flex items-center gap-[5px] leading-[22px] whitespace-nowrap">表格格式<Chev /></span>
          </button>
          <div className="mt-[16px] ml-[6px] flex h-[93px] w-[342px] rounded-[4px] border border-[#868686]">
            <div className="grid flex-1 grid-cols-2 content-start gap-2 bg-[#d4d4d4] pt-2 pr-1 pl-[5px]">
              <StyleCell name="常规" className="bg-white pl-[7px] text-black outline-[4px] outline-[#979797]" />
              <StyleCell name="差" className="bg-[#ffc7ce] pl-[7px] text-[#9c0006]" />
              <StyleCell name="好" className="bg-[#c6efce] pl-[7px] text-[#006100]" />
              <StyleCell name="适中" className="bg-[#ffeb9c] pl-[7px] text-[#9c5700]" />
            </div>
            <div className="flex w-[22px] flex-col">
              <button type="button" aria-label="上一行" className="flex flex-1 rotate-180 items-center justify-center"><Chev color="#7d7d7d" /></button>
              <button type="button" aria-label="下一行" className="flex flex-1 items-center justify-center border-y-2 border-[#868686]"><Chev /></button>
              <button type="button" aria-label="其他样式" className="flex flex-1 flex-col items-center justify-center gap-[2px]">
                <span className="h-[2px] w-[11px] bg-white" />
                <Chev />
              </button>
            </div>
          </div>
        </div>
      </Group>
      <VLine className="mt-[6px] h-[135px]" />

      <Group label="单元格" className="w-[215px]">
        <div className="flex pt-1 pl-[10px]">
          <BigButton icon={<CellsIcon kind="insert" />} label="插入" className="w-[65px]" gap="pt-[2px]" />
          <BigButton icon={<CellsIcon kind="delete" />} label="删除" className="w-[65px]" gap="pt-[2px]" />
          <BigButton icon={<CellsIcon kind="format" />} label="格式" className="w-[65px]" gap="pt-0" />
        </div>
      </Group>
      <VLine className="mt-[6px] h-[135px]" />

      <Group label="编辑" className="w-[369px]">
        <div className="flex pt-1 pl-[18px]">
          <div className="flex w-[140px] flex-col">
            <RowButton icon={<SigmaIcon />} label="自动求和">
              <span className="ml-[18px]"><Chev /></span>
            </RowButton>
            <RowButton icon={<FillDownIcon />} label="填充">
              <span className="ml-[5px]"><Chev /></span>
            </RowButton>
            <RowButton icon={<EraserIcon />} label="清除">
              <span className="ml-[5px]"><Chev /></span>
            </RowButton>
          </div>
          <BigButton icon={<SortIcon />} label="排序和筛选" className="w-[100px]" gap="pt-0" />
          <BigButton icon={<FindIcon />} label="查找和选择" className="w-[100px]" gap="pt-0" />
        </div>
      </Group>
      <VLine className="mt-[6px] h-[135px]" />

      <Group label="新建组" className="w-[84px]">
        <div className="flex justify-center pt-1">
          <BigButton icon={<RedoIcon />} label="恢复" dim className="w-[60px]" gap="pt-0" />
        </div>
      </Group>
      <VLine className="mt-[6px] h-[135px]" />
      <div className="flex flex-1 items-end justify-center pb-[14px] pl-[6px]">
        <button type="button" aria-label="折叠功能区">
          <svg width="16" height="10" viewBox="0 0 16 10" fill="none" stroke="#fff" strokeWidth="1.800"><path d="m1 1 7 7 7-7" /></svg>
        </button>
      </div>
    </div>
  );
}

function FormulaBar() {
  const box = "flex items-center rounded-[5px] border border-[#7d7d7d] bg-[#4d4d4d]";
  return (
    <div className="mt-3 mr-[11px] mb-[10px] ml-[9px] flex h-[37px] shrink-0">
      <div className={`w-[152px] ${box}`}>
        <input aria-label="名称框" defaultValue="A1" className="w-[120px] bg-transparent pl-[6px] text-[19px] outline-none" />
        <button type="button" aria-label="名称列表">
          <svg width="16" height="10" viewBox="0 0 16 10" fill="none" stroke="#d0d0d0" strokeWidth="1.600" className="ml-2"><path d="m1 1 7 7 7-7" /></svg>
        </button>
      </div>
      <div className="flex w-[30px] flex-col items-center justify-center gap-1">
        <span className="h-[3px] w-[3px] bg-[#a0a0a0]" />
        <span className="h-[3px] w-[3px] bg-[#a0a0a0]" />
        <span className="h-[3px] w-[3px] bg-[#a0a0a0]" />
      </div>
      <div className={`w-[110px] justify-between pr-[6px] pl-2 ${box}`}>
        <button type="button" aria-label="取消">
          <svg width="19" height="18" viewBox="0 0 19 18" stroke="#858585" strokeWidth="1.500"><path d="m1 1 17 16M18 1 1 17" /></svg>
        </button>
        <button type="button" aria-label="输入">
          <svg width="24" height="18" viewBox="0 0 24 18" fill="none" stroke="#858585" strokeWidth="1.500"><path d="m1 10 7 6.500L23 1" /></svg>
        </button>
        <button type="button" aria-label="插入函数" className="font-['Liberation_Serif'] text-[27px] leading-8 text-[#d8d8d8] italic">fx</button>
      </div>
      <div className={`ml-[6px] flex-1 ${box}`}>
        <input aria-label="编辑栏" defaultValue="2026_03_08_17:37:32:896" className="flex-1 bg-transparent pl-4 text-[20px] outline-none" />
        <button type="button" aria-label="展开编辑栏" className="mr-[6px]">
          <svg width="16" height="10" viewBox="0 0 16 10" fill="none" stroke="#d0d0d0" strokeWidth="1.600"><path d="m1 1 7 7 7-7" /></svg>
        </button>
      </div>
    </div>
  );
}

function headTone(name: string) {
  if (name === "I") return "bg-[#0f6636]";
  if (name === "A") return "bg-[#262626] border-b-[#107c41]";
  return "bg-[#2d2d2d]";
}

function Sheet() {
  return (
    <div className="flex min-h-0 flex-1">
      <div className="min-w-0 flex-1 overflow-hidden bg-white">
        <table className="w-[2528px] table-fixed border-separate border-spacing-0 font-['Noto_Sans_CJK_SC',sans-serif] text-[11px] leading-[13px] text-black">
          <colgroup>
            <col className="w-5" />
            {COLS.map((c) => (
              <col key={c} className="w-[57px]" />
            ))}
          </colgroup>
          <thead>
            <tr>
              <th className="border-r border-b border-[#a8a8a8] bg-[#2d2d2d] p-0">
                <svg width="8" height="8" viewBox="0 0 8 8" className="ml-2"><path d="M8 0v8H0z" fill="#e8e8e8" /></svg>
              </th>
              {COLS.map((c) => (
                <th key={c} scope="col" className={`border-r border-b border-[#a8a8a8] p-0 text-[12px] leading-[15px] font-normal text-[#e8e8e8] ${headTone(c)}`}>
                  {c}
                </th>
              ))}
            </tr>
          </thead>
          <tbody>
            {ROWS.map((row, r) => (
              <tr key={r}>
                <th scope="row" className="border-r border-b border-[#a8a8a8] bg-[#2d2d2d] p-0 pb-px text-left font-normal text-[#f0f0f0]">
                  <div className="w-[18px] text-center">{r + 1}</div>
                </th>
                {COLS.map((c, i) => (
                  <td
                    key={c}
                    className={
                      i === 0
                        ? "relative border-r border-b border-[#dedede] p-0 pb-px"
                        : "border-r border-b border-[#dedede] p-0 pr-[2px] pb-px text-right"
                    }
                  >
                    {i === 0 ? <div className="overflow-hidden pl-px whitespace-nowrap">{row[0]}</div> : row[i]}
                    {i === 0 && r === 0 && (
                      <>
                        <span className="absolute -inset-px border-2 border-[#107c41]" />
                        <span className="absolute -right-[2px] -bottom-[2px] h-[6px] w-[6px] border-t border-l border-white bg-[#107c41]" />
                      </>
                    )}
                  </td>
                ))}
              </tr>
            ))}
          </tbody>
        </table>
      </div>
      <div className="flex w-[29px] flex-col items-center rounded-xl border-r-2 border-l-2 border-[#2d2d2d] bg-[#363636] pt-2 pb-[5px]">
        <svg width="14" height="10" viewBox="0 0 14 10"><path d="m7 0 7 10H0z" fill="#c8c8c8" /></svg>
        <div className="mt-2 h-[26px] w-3 rounded-full bg-[#c0c0c0]" />
        <svg width="14" height="10" viewBox="0 0 14 10" className="mt-auto"><path d="m7 10 7-10H0z" fill="#c8c8c8" /></svg>
      </div>
    </div>
  );
}

function SheetBar() {
  return (
    <div className="flex h-12 shrink-0 items-center">
      <button type="button" aria-label="上一个工作表" className="ml-[33px]">
        <svg width="8" height="13" viewBox="0 0 8 13" fill="none" stroke="#9a9a9a" strokeWidth="1.300"><path d="M7 .5 1 6.500l6 6" /></svg>
      </button>
      <button type="button" aria-label="下一个工作表" className="ml-[41px]">
        <svg width="8" height="13" viewBox="0 0 8 13" fill="none" stroke="#9a9a9a" strokeWidth="1.300"><path d="m1 .5 6 6-6 6" /></svg>
      </button>
      <button type="button" className="ml-[73px] flex h-[42px] w-[402px] flex-col self-start rounded-b-[5px] bg-white px-3 pt-1 text-[22px] leading-[31px] whitespace-nowrap text-[#222]">
        <span className="w-full text-center">2026_03_08_173732_3D_motion_poi</span>
        <span className="h-[3px] w-full bg-[#107c41]" />
      </button>
      <VLine className="ml-[6px] h-7" />
      <button type="button" aria-label="新工作表" className="ml-16">
        <svg width="15" height="15" viewBox="0 0 15 15" stroke="#e0e0e0" strokeWidth="1.300"><path d="M7.500 0v15M0 7.500h15" /></svg>
      </button>
      <div className="ml-auto flex w-1 flex-col gap-[3px]">
        <span className="h-[3px] w-[3px] bg-white" />
        <span className="h-[3px] w-[3px] bg-white" />
        <span className="h-[3px] w-[3px] bg-white" />
      </div>
      <div className="mr-7 ml-[22px] flex h-[26px] w-[37.8%] items-center rounded-xl bg-[#363636] px-[7px]">
        <svg width="11" height="14" viewBox="0 0 11 14"><path d="M11 0v14L0 7z" fill="#c8c8c8" /></svg>
        <div className="ml-2 h-3 w-[74px] rounded-full bg-[#c0c0c0]" />
        <svg width="11" height="14" viewBox="0 0 11 14" className="ml-auto"><path d="m0 0 11 7-11 7z" fill="#c8c8c8" /></svg>
      </div>
    </div>
  );
}

function StatusBar() {
  return (
    <footer className="h-[26px] shrink-0 overflow-hidden bg-[#363636]">
      <div className="flex h-[34px] items-center text-[18px]">
        <span className="ml-2">就绪</span>
        <button type="button" className="ml-[26px] flex items-center gap-[2px] whitespace-nowrap">
          <svg width="24" height="24" viewBox="0 0 24 24" fill="none" stroke="#fff" strokeWidth="1.600">
            <path d="M8 2.500a10 10 0 0 0-2 17" strokeDasharray="6 2" />
            <path d="M11 1v11M7.500 8.500 11 12l3.500-3.500M15 3l4 4" />
            <path d="M14 16c0-3 7-3 6 0-.500 2-3 2-3 4M11 22l4-2" />
          </svg>
          辅助功能: 不可用
        </button>
        <button type="button" aria-label="普通视图" className="ml-auto flex h-full w-[60px] items-center justify-center bg-[#404040]">
          <svg width="20" height="21" viewBox="0 0 20 21" fill="none" stroke="#fff" strokeWidth="1.600"><path d="M1 1h18v19H1zM1 7.500h18M1 13.500h18M7 1v19M13 1v19" /></svg>
        </button>
        <button type="button" aria-label="页面布局" className="flex h-full w-[60px] items-center justify-center">
          <svg width="22" height="21" viewBox="0 0 22 21" fill="none" stroke="#fff" strokeWidth="1.600"><path d="M1 1h20v19H1zM5.500 4.500h11v13h-11zM8 8h6M8 11h6M8 14h6" /></svg>
        </button>
        <button type="button" aria-label="分页预览" className="flex h-full w-[60px] items-center justify-center">
          <svg width="22" height="21" viewBox="0 0 22 21" fill="none" stroke="#fff" strokeWidth="1.600"><path d="M1 1h20v19H1zM1 14h12V1M7 1v13" /></svg>
        </button>
        <button type="button" aria-label="缩小" className="ml-[9px] h-[2px] w-[10px] bg-[#d0d0d0]" />
        <div className="relative mx-[9px] flex w-[147px] items-center">
          <span className="absolute top-1/2 left-1/2 h-[9px] w-px -translate-y-1/2 bg-[#9a9a9a]" />
          <input
            type="range"
            aria-label="显示比例"
            min={10}
            max={190}
            defaultValue={55}
            className="relative h-[2px] w-full appearance-none bg-[#8a8a8a] [&::-webkit-slider-thumb]:h-[17px] [&::-webkit-slider-thumb]:w-2 [&::-webkit-slider-thumb]:appearance-none [&::-webkit-slider-thumb]:bg-[#b0b0b0]"
          />
        </div>
        <button type="button" aria-label="放大">
          <svg width="11" height="11" viewBox="0 0 11 11" stroke="#d0d0d0" strokeWidth="1.400"><path d="M5.500 0v11M0 5.500h11" /></svg>
        </button>
        <span className="mr-[21px] ml-[20px] text-[19px]">55%</span>
      </div>
    </footer>
  );
}

export default function App() {
  return (
    <div className="flex h-screen flex-col overflow-hidden bg-[#2d2d2d] font-['Open_Sans','Noto_Sans_CJK_SC',sans-serif] text-white">
      <TitleBar />
      <TabBar />
      <Ribbon />
      <FormulaBar />
      <Sheet />
      <SheetBar />
      <StatusBar />
    </div>
  );
}
